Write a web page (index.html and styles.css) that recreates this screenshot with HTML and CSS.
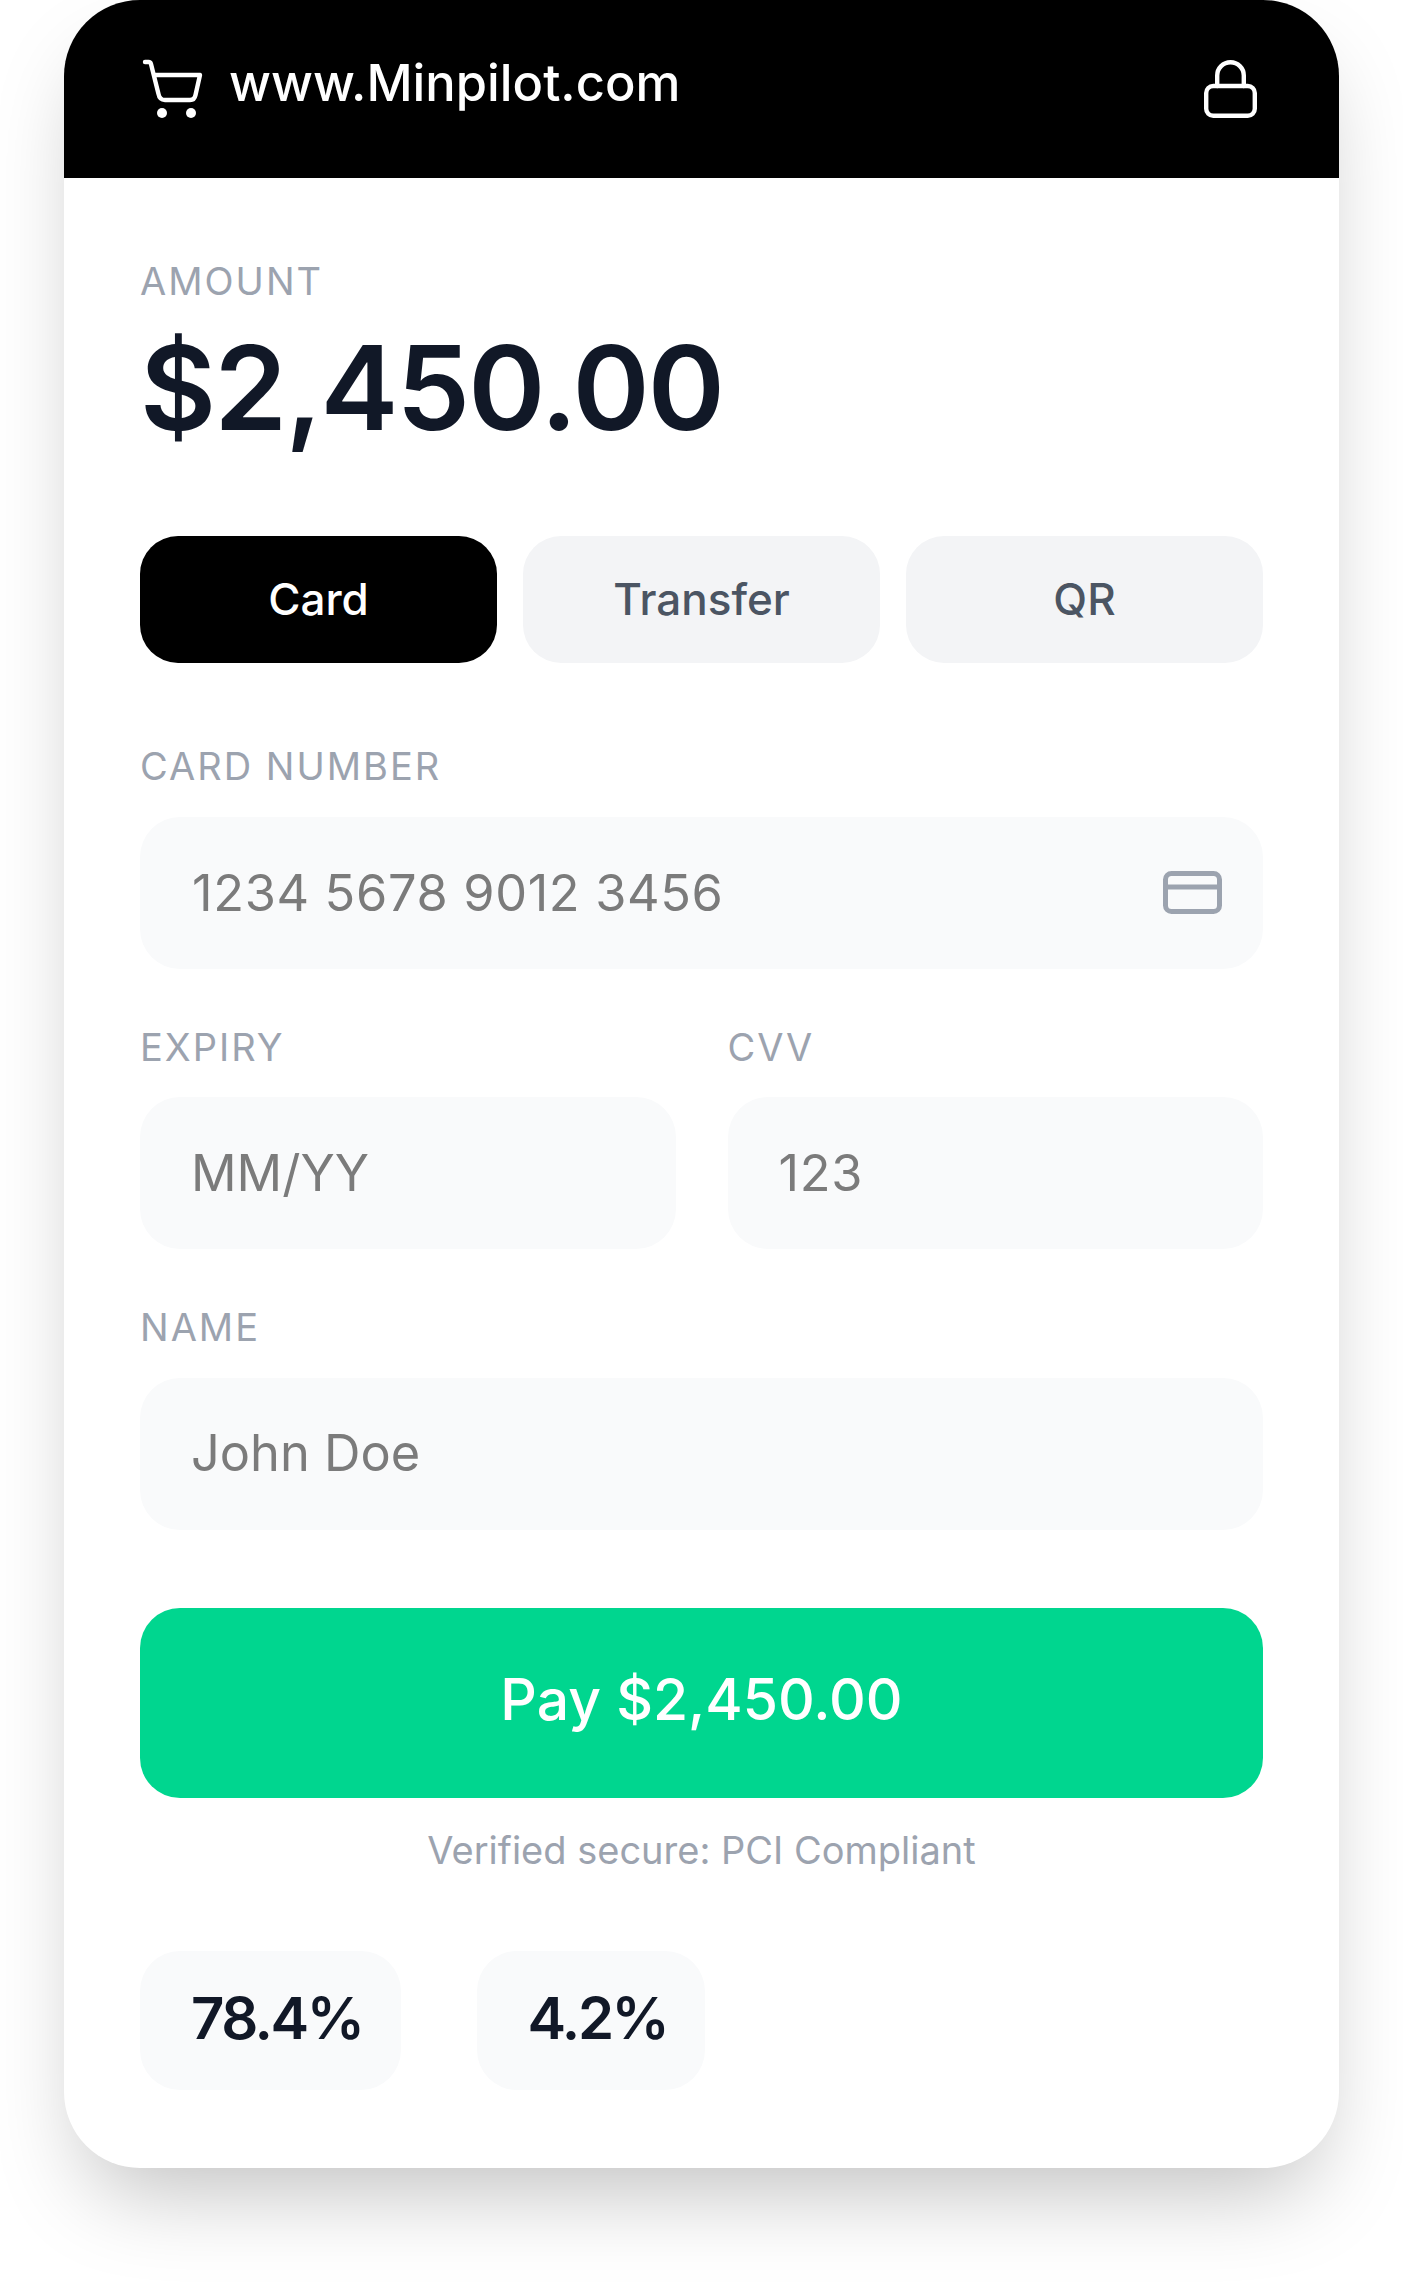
FILE: index.html
```html
<!DOCTYPE html>
<html lang="en">
<head>
<meta charset="utf-8">
<title>Minpilot checkout</title>
<link rel="stylesheet" href="styles.css">
</head>
<body>
<main class="card">
  <header class="topbar">
    <div class="brand">
      <svg class="cart-icon" viewBox="0 0 64 64" fill="none" stroke="#fff" stroke-width="4.4" stroke-linecap="round" stroke-linejoin="round">
        <path d="M5 4H8.5Q10.5 4 11 6L18.5 36Q19.5 42 25 42H50Q54.5 42 55.5 37L60 17H15"/>
        <circle cx="22" cy="55" r="5" fill="#fff" stroke="none"/>
        <circle cx="51" cy="55" r="5" fill="#fff" stroke="none"/>
      </svg>
      <span class="brand-name">www.Minpilot.com</span>
    </div>
    <svg class="lock-icon" viewBox="0 0 53 58" fill="none" stroke="#fff" stroke-width="4.4" stroke-linecap="round" stroke-linejoin="round">
      <rect x="2.2" y="26" width="48.6" height="29.8" rx="7"/>
      <path d="M13.2 26V15.5a13.3 13.3 0 0 1 26.6 0V26"/>
    </svg>
  </header>
  <div class="content">
    <div class="label amount-label">AMOUNT</div>
    <div class="amount">$2,450.00</div>
    <div class="tabs">
      <div class="tab active">Card</div>
      <div class="tab">Transfer</div>
      <div class="tab">QR</div>
    </div>
    <div class="field card-field">
      <div class="label">CARD NUMBER</div>
      <div class="input input-icon digits">
        <span>1234 5678 9012 3456</span>
        <svg class="card-icon" viewBox="0 0 59 43" fill="none" stroke="#9ca3af" stroke-width="5">
          <rect x="2.5" y="2.5" width="54" height="38" rx="6"/>
          <path d="M2.5 16H56.5"/>
        </svg>
      </div>
    </div>
    <div class="two-col">
      <div class="field">
        <div class="label">EXPIRY</div>
        <div class="input">MM/YY</div>
      </div>
      <div class="field">
        <div class="label">CVV</div>
        <div class="input digits">123</div>
      </div>
    </div>
    <div class="field">
      <div class="label">NAME</div>
      <div class="input">John Doe</div>
    </div>
    <div class="pay">Pay $2,450.00</div>
    <div class="secure">Verified secure: PCI Compliant</div>
    <div class="stats">
      <div class="stat">78.4%</div>
      <div class="stat">4.2%</div>
    </div>
  </div>
</main>
</body>
</html>
```
FILE: styles.css
```css
* { box-sizing: border-box; }
html, body { margin: 0; padding: 0; background: #fff; }
body {
  width: 1403px;
  height: 2296px;
  overflow: hidden;
  padding-left: 64px;
  font-family: Inter, "Liberation Sans", sans-serif;
}
.card {
  width: 1275px;
  height: 2168px;
  background: #fff;
  border-radius: 76px;
  box-shadow: 0 44px 88px -22px rgba(0, 0, 0, 0.25);
}
.topbar {
  height: 178px;
  background: #000;
  border-radius: 76px 76px 0 0;
  padding: 58px 82px 0 76px;
  display: flex;
  justify-content: space-between;
  align-items: flex-start;
}
.brand { display: flex; align-items: flex-start; gap: 25px; }
.cart-icon { width: 64px; height: 64px; }
.brand-name {
  color: #fff;
  font-size: 50.6px;
  font-weight: 500;
  line-height: 52px;
  margin-top: -1px;
}
.lock-icon { width: 53px; height: 58px; margin-top: 2px; }
.content { padding: 76px 76px 0; }
.label {
  color: #9ca3af;
  font-size: 38px;
  line-height: 52px;
  letter-spacing: 2px;
}
.amount-label { height: 52px; margin-top: 1px; }
.amount {
  color: #111827;
  font-size: 117px;
  font-weight: 600;
  line-height: 128px;
  letter-spacing: -1.9px;
  margin-top: 17px;
}
.tabs {
  display: grid;
  grid-template-columns: repeat(3, 1fr);
  gap: 26px;
  margin-top: 84px;
}
.tab {
  height: 127px;
  padding-bottom: 1px;
  border-radius: 38px;
  background: #f3f4f6;
  color: #4b5563;
  font-size: 44px;
  font-weight: 500;
  display: flex;
  align-items: center;
  justify-content: center;
}
.tab.active { background: #000; color: #fff; }
.field .label { margin-bottom: 24.5px; }
.field { margin-top: 52px; }
.card-field { margin-top: 77px; }
.input {
  height: 152px;
  padding: 0 51px 2px;
  background: #f9fafb;
  border-radius: 40px;
  color: #7b7b7b;
  font-size: 50.5px;
  display: flex;
  align-items: center;
}
.digits { letter-spacing: 0.65px; }
.input-icon { justify-content: space-between; padding: 0 41px 0 52px; }
.card-icon { width: 59px; height: 43px; }
.two-col {
  display: grid;
  grid-template-columns: 1fr 1fr;
  gap: 52px;
}
.pay {
  height: 190px;
  padding-bottom: 8px;
  margin-top: 78.5px;
  background: #00d68f;
  border-radius: 40px;
  color: #fff;
  font-size: 57px;
  font-weight: 500;
  display: flex;
  align-items: center;
  justify-content: center;
}
.secure {
  color: #9ca3af;
  font-size: 38px;
  line-height: 52px;
  text-align: center;
  margin-top: 26px;
}
.stats { display: flex; gap: 76px; margin-top: 75px; }
.stat {
  height: 139px;
  padding: 0 38px 5px 51px;
  background: #f9fafb;
  border-radius: 40px;
  color: #111827;
  font-size: 58px;
  font-weight: 600;
  letter-spacing: -2.45px;
  display: flex;
  align-items: center;
}
```
